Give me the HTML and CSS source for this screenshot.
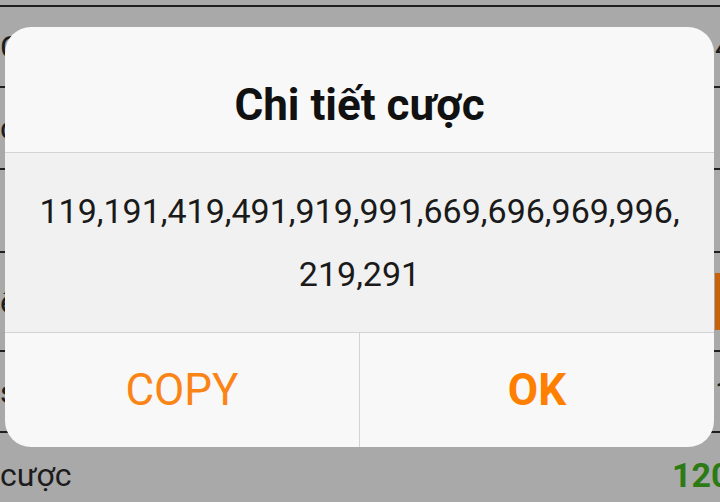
FILE: index.html
```html
<!DOCTYPE html>
<html lang="vi">
<head>
<meta charset="utf-8">
<title>Chi tiết cược</title>
<link rel="stylesheet" href="styles.css">
</head>
<body>
<div class="page">
  <div class="topbar"></div>
  <div class="rows">
    <div class="row r1"><span class="label">Cược</span><span class="value v-small">4</span></div>
    <div class="row r2"><span class="label">cổng</span><span class="value"></span></div>
    <div class="row r3"><span class="label"></span><span class="value"></span></div>
    <div class="row r4"><span class="label">ết</span><span class="value"><span class="orange-btn"></span></span></div>
    <div class="row r5"><span class="label">số</span><span class="value v-small">1</span></div>
    <div class="row r6"><span class="label">cược</span><span class="value v-green">120</span></div>
  </div>
</div>

<div class="dialog">
  <div class="dlg-title">Chi tiết cược</div>
  <div class="dlg-body">119,<wbr>191,<wbr>419,<wbr>491,<wbr>919,<wbr>991,<wbr>669,<wbr>696,<wbr>969,<wbr>996,<wbr>219,<wbr>291</div>
  <div class="dlg-actions">
    <button class="btn btn-copy">COPY</button>
    <button class="btn btn-ok">OK</button>
  </div>
</div>
</body>
</html>
```

FILE: styles.css
```css
* { box-sizing: border-box; }
html, body {
  margin: 0;
  padding: 0;
}
body {
  width: 720px;
  height: 502px;
  overflow: hidden;
  background: #a9a9a9;
  font-family: Roboto, "Noto Sans", sans-serif;
  position: relative;
}
.page {
  display: flex;
  flex-direction: column;
  width: 720px;
}
.topbar { height: 5px; }
.rows {
  border-top: 2px solid #1f1f1f;
  display: flex;
  flex-direction: column;
}
.row {
  display: flex;
  justify-content: space-between;
  align-items: center;
  border-bottom: 2px solid #1f1f1f;
  font-size: 32px;
  color: #1c1c1c;
}
.r1 { height: 81px; }
.r2 { height: 82px; }
.r3 { height: 83px; }
.r4 { height: 99px; }
.r5 { height: 81px; }
.r6 {
  height: 70px;
  border-bottom: none;
  padding-top: 14px;
}
.label {
  padding-left: 0;
  white-space: nowrap;
}
.value {
  width: 48px;
  white-space: nowrap;
  overflow: visible;
}
.v-small { padding-left: 43px; }
.v-green {
  color: #2c7a14;
  font-weight: bold;
  font-size: 34px;
}
.orange-btn {
  display: block;
  margin-left: 43px;
  width: 40px;
  height: 57px;
  background: #c5620a;
}

.dialog {
  position: absolute;
  left: 5px;
  top: 27px;
  width: 709px;
  height: 420px;
  border-radius: 26px;
  overflow: hidden;
  background: #f8f8f8;
  display: flex;
  flex-direction: column;
}
.dlg-title {
  height: 126px;
  padding-top: 53px;
  text-align: center;
  font-size: 44px;
  line-height: 50px;
  font-weight: bold;
  color: #111;
  border-bottom: 1px solid #d3d3d3;
}
.dlg-body {
  height: 180px;
  background: #f1f1f1;
  padding: 27px 16px;
  text-align: center;
  font-size: 34px;
  line-height: 63px;
  color: #1a1a1a;
  border-bottom: 1px solid #d3d3d3;
}
.dlg-actions {
  flex: 1;
  display: flex;
}
.btn {
  flex: 1;
  border: none;
  background: transparent;
  font-family: Roboto, "Noto Sans", sans-serif;
  font-size: 44px;
  color: #fb8416;
  padding: 0;
  margin: 0;
}
.btn-ok {
  font-weight: bold;
  color: #ff7f00;
  border-left: 1px solid #d3d3d3;
}
```
